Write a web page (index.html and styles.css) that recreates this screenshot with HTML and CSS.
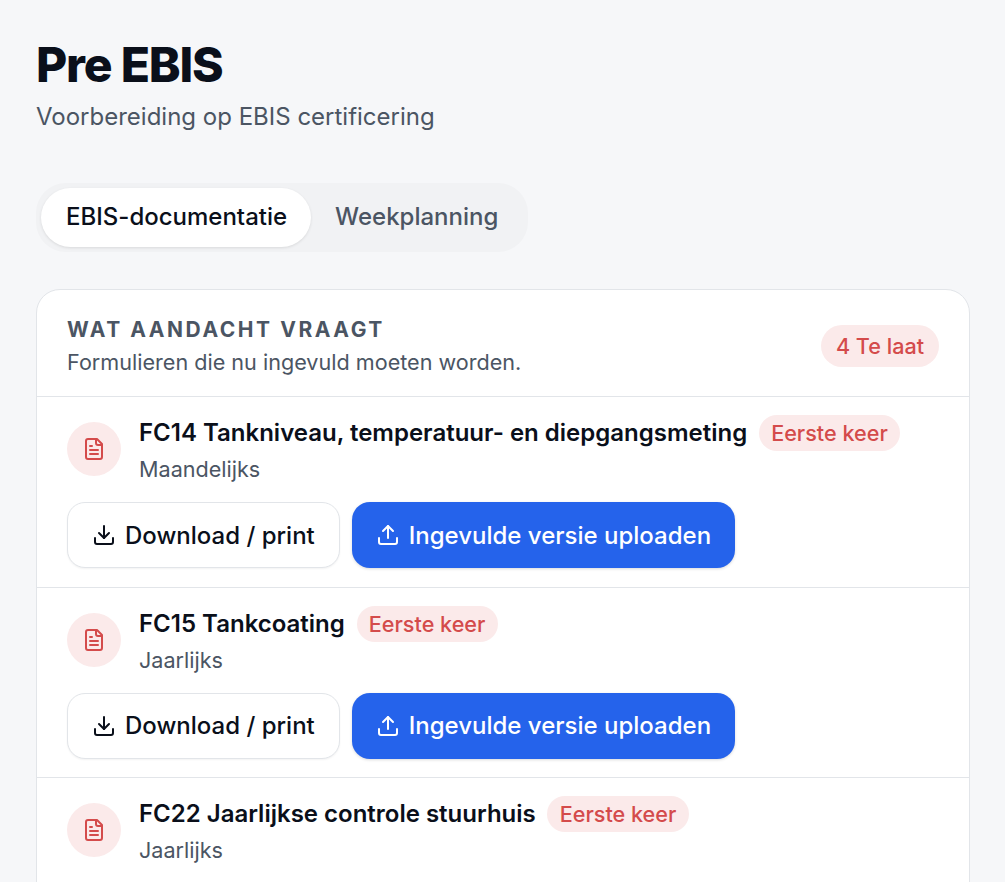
FILE: index.html
```html
<!DOCTYPE html>
<html lang="nl">
<head>
    <meta charset="UTF-8">
    <meta name="viewport" content="width=device-width, initial-scale=1.0">
    <title>Pre EBIS</title>
    <link rel="stylesheet" href="styles.css">
</head>
<body>

<div class="page">
    <header class="page-header">
        <h1>Pre EBIS</h1>
        <p>Voorbereiding op EBIS certificering</p>
    </header>

    <div class="tabs">
        <div class="tab tab-active">EBIS-documentatie</div>
        <div class="tab">Weekplanning</div>
    </div>

    <div class="card">
        <div class="card-header">
            <div>
                <h2>Wat aandacht vraagt</h2>
                <p>Formulieren die nu ingevuld moeten worden.</p>
            </div>
            <span class="badge badge-late">4 Te laat</span>
        </div>

        <div class="row">
            <div class="row-top">
                <div class="doc-icon">
                    <svg viewBox="0 0 24 24"><path d="M15 2H6a2 2 0 0 0-2 2v16a2 2 0 0 0 2 2h12a2 2 0 0 0 2-2V7Z"/><path d="M14 2v4a2 2 0 0 0 2 2h4"/><path d="M10 9H8"/><path d="M16 13H8"/><path d="M16 17H8"/></svg>
                </div>
                <div>
                    <div class="row-title">
                        <h3>FC14 Tankniveau, temperatuur- en diepgangsmeting</h3>
                        <span class="badge">Eerste keer</span>
                    </div>
                    <p class="row-sub">Maandelijks</p>
                </div>
            </div>
            <div class="actions">
                <button class="btn btn-outline" type="button">
                    <svg viewBox="0 0 24 24"><path d="M21 15v4a2 2 0 0 1-2 2H5a2 2 0 0 1-2-2v-4"/><path d="m7 10 5 5 5-5"/><path d="M12 15V3"/></svg>
                    Download / print
                </button>
                <button class="btn btn-primary" type="button">
                    <svg viewBox="0 0 24 24"><path d="M21 15v4a2 2 0 0 1-2 2H5a2 2 0 0 1-2-2v-4"/><path d="m17 8-5-5-5 5"/><path d="M12 3v12"/></svg>
                    Ingevulde versie uploaden
                </button>
            </div>
        </div>

        <div class="row">
            <div class="row-top">
                <div class="doc-icon">
                    <svg viewBox="0 0 24 24"><path d="M15 2H6a2 2 0 0 0-2 2v16a2 2 0 0 0 2 2h12a2 2 0 0 0 2-2V7Z"/><path d="M14 2v4a2 2 0 0 0 2 2h4"/><path d="M10 9H8"/><path d="M16 13H8"/><path d="M16 17H8"/></svg>
                </div>
                <div>
                    <div class="row-title">
                        <h3>FC15 Tankcoating</h3>
                        <span class="badge">Eerste keer</span>
                    </div>
                    <p class="row-sub">Jaarlijks</p>
                </div>
            </div>
            <div class="actions">
                <button class="btn btn-outline" type="button">
                    <svg viewBox="0 0 24 24"><path d="M21 15v4a2 2 0 0 1-2 2H5a2 2 0 0 1-2-2v-4"/><path d="m7 10 5 5 5-5"/><path d="M12 15V3"/></svg>
                    Download / print
                </button>
                <button class="btn btn-primary" type="button">
                    <svg viewBox="0 0 24 24"><path d="M21 15v4a2 2 0 0 1-2 2H5a2 2 0 0 1-2-2v-4"/><path d="m17 8-5-5-5 5"/><path d="M12 3v12"/></svg>
                    Ingevulde versie uploaden
                </button>
            </div>
        </div>

        <div class="row">
            <div class="row-top">
                <div class="doc-icon">
                    <svg viewBox="0 0 24 24"><path d="M15 2H6a2 2 0 0 0-2 2v16a2 2 0 0 0 2 2h12a2 2 0 0 0 2-2V7Z"/><path d="M14 2v4a2 2 0 0 0 2 2h4"/><path d="M10 9H8"/><path d="M16 13H8"/><path d="M16 17H8"/></svg>
                </div>
                <div>
                    <div class="row-title">
                        <h3>FC22 Jaarlijkse controle stuurhuis</h3>
                        <span class="badge">Eerste keer</span>
                    </div>
                    <p class="row-sub">Jaarlijks</p>
                </div>
            </div>
        </div>
    </div>
</div>

</body>
</html>
```

FILE: styles.css
```css
* {
    margin: 0;
    padding: 0;
    box-sizing: border-box;
}

html, body {
    height: 882px;
    overflow: hidden;
}

body {
    font-family: Inter, "Liberation Sans", sans-serif;
    background-color: #f6f7f9;
    color: #0a0f1a;
}

.page {
    height: 882px;
    padding: 37px 35px 0 36px;
    overflow: hidden;
}

.page-header h1 {
    font-size: 48px;
    line-height: 56px;
    font-weight: 800;
    letter-spacing: -1.2px;
}

.page-header p {
    margin-top: 8px;
    font-size: 24px;
    line-height: 32px;
    color: #4b5563;
}

.tabs {
    display: inline-flex;
    margin-top: 50px;
    padding: 5px;
    background-color: #f1f2f4;
    border-radius: 30px;
}

.tab {
    padding: 0 25px 2px 24px;
    font-size: 24px;
    font-weight: 500;
    line-height: 57px;
    color: #4b5563;
    border-radius: 30px;
}

.tab-active {
    padding: 0 24px 2px 25px;
    background-color: #fff;
    color: #0a0f1a;
    box-shadow: 0 1px 3px rgba(0, 0, 0, 0.1);
}

.card {
    height: 800px;
    margin-top: 37px;
    background-color: #fff;
    border: 1px solid #e2e5e9;
    border-radius: 24px;
    overflow: hidden;
}

.card-header {
    display: flex;
    justify-content: space-between;
    align-items: center;
    padding: 25px 30px 18px;
}

.card-header h2 {
    font-size: 21px;
    line-height: 30px;
    font-weight: 700;
    letter-spacing: 2.55px;
    text-transform: uppercase;
    color: #4b5563;
}

.card-header p {
    margin-top: 1px;
    font-size: 21.6px;
    line-height: 32px;
    color: #4b5563;
}

.badge {
    display: inline-block;
    padding: 0 12.3px;
    font-size: 21.6px;
    font-weight: 500;
    line-height: 36px;
    color: #d44b4b;
    background-color: #fbeaea;
    border-radius: 18px;
    white-space: nowrap;
}

.badge-late {
    margin-bottom: 1px;
    padding: 0 15px;
    line-height: 42px;
    border-radius: 21px;
}

.row {
    padding: 18px 30px 18.5px;
    border-top: 1px solid #e2e5e9;
}

.row-top {
    display: flex;
    gap: 18px;
}

.doc-icon {
    flex: none;
    width: 54px;
    height: 54px;
    margin-top: 7px;
    display: flex;
    align-items: center;
    justify-content: center;
    background-color: #fbeaea;
    border-radius: 50%;
}

.doc-icon svg {
    width: 24px;
    height: 24px;
    fill: none;
    stroke: #d44b4b;
    stroke-width: 2;
    stroke-linecap: round;
    stroke-linejoin: round;
}

.row-title {
    display: flex;
    align-items: center;
    gap: 11.7px;
}

.row-title h3 {
    font-size: 24px;
    line-height: 36px;
    font-weight: 600;
}

.row-sub {
    font-size: 21.6px;
    line-height: 36px;
    color: #4b5563;
}

.actions {
    display: flex;
    gap: 12px;
    margin-top: 15px;
}

.btn {
    display: flex;
    align-items: center;
    gap: 9px;
    height: 66px;
    padding: 0 24px;
    font-family: inherit;
    font-size: 24px;
    font-weight: 500;
    border-radius: 18px;
}

.btn svg {
    width: 24px;
    height: 24px;
    fill: none;
    stroke: currentColor;
    stroke-width: 2;
    stroke-linecap: round;
    stroke-linejoin: round;
}

.btn-outline {
    background-color: #fff;
    color: #0a0f1a;
    border: 1px solid #e2e5e9;
    box-shadow: 0 1px 2px rgba(0, 0, 0, 0.05);
}

.btn-primary {
    background-color: #2563eb;
    color: #fff;
    border: none;
    box-shadow: 0 1px 3px rgba(0, 0, 0, 0.15);
}
```
